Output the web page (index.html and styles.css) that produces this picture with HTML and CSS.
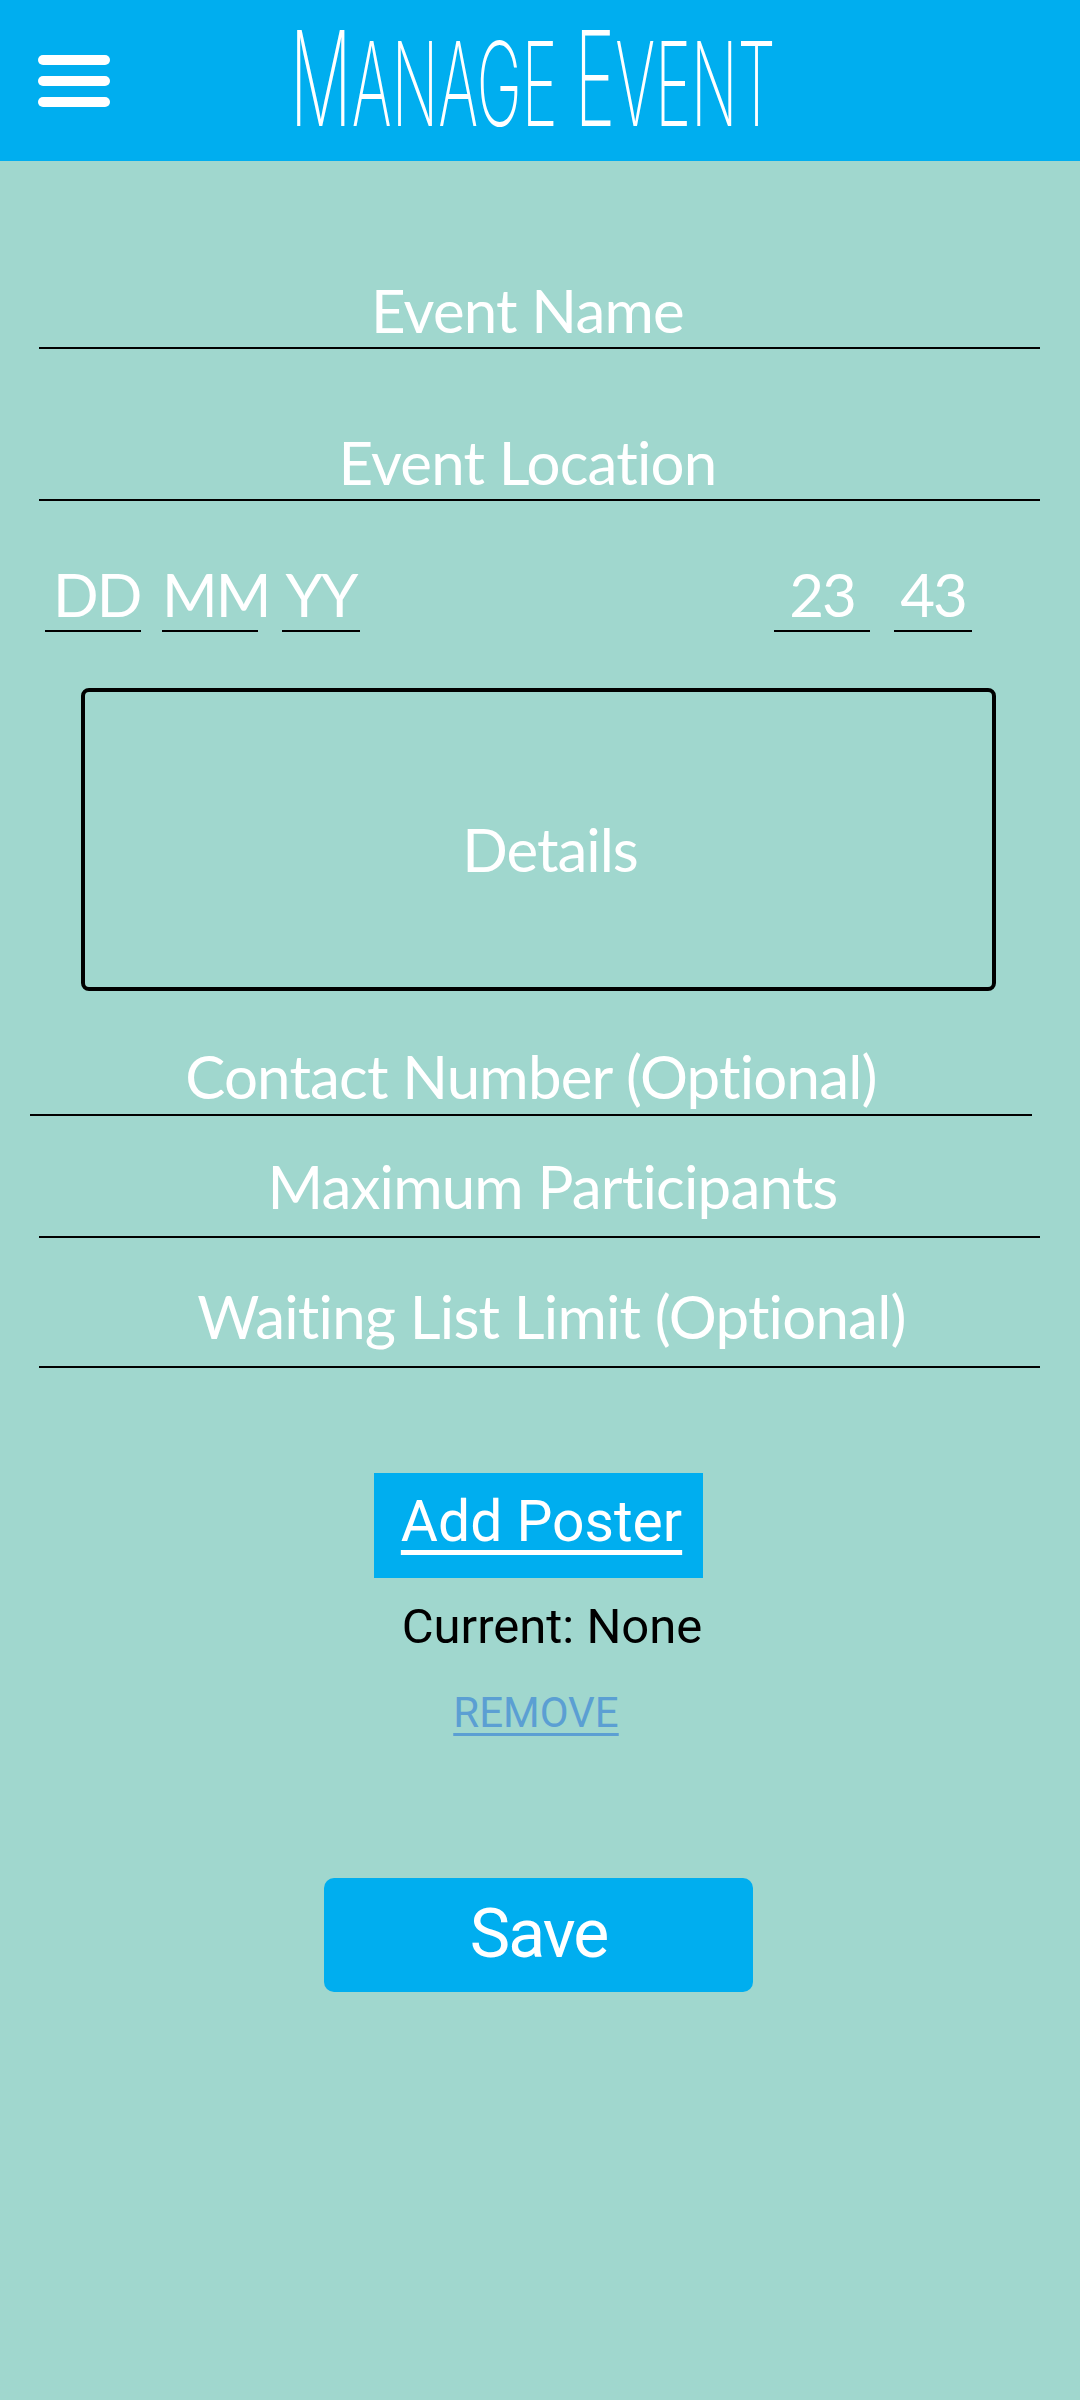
FILE: index.html
```html
<!DOCTYPE html>
<html lang="en">
<head>
<meta charset="utf-8">
<title>Manage Event</title>
<link rel="stylesheet" href="styles.css">
</head>
<body>
<header class="topbar">
  <div class="menu" aria-label="Menu">
    <span class="bar"></span>
    <span class="bar"></span>
    <span class="bar"></span>
  </div>
  <h1 class="title"><span class="title-inner"><span class="big">M</span>anage <span class="big">E</span>vent</span></h1>
</header>
<main class="form">
  <div class="field f-name">Event Name</div>
  <div class="field f-loc">Event Location</div>
  <div class="daterow">
    <div class="dgroup">
      <div class="dfield w96 dd">DD</div>
      <div class="dfield w96">MM</div>
      <div class="dfield w78 yy">YY</div>
    </div>
    <div class="dgroup tgroup">
      <div class="dfield w96">23</div>
      <div class="dfield w78">43</div>
    </div>
  </div>
  <div class="details"><span>Details</span></div>
  <div class="field f-contact">Contact Number (Optional)</div>
  <div class="field f-max">Maximum Participants</div>
  <div class="field f-wait">Waiting List Limit (Optional)</div>
  <div class="poster"><span class="poster-label">Add Poster</span></div>
  <div class="current">Current: None</div>
  <div class="remove">REMOVE</div>
  <div class="save">Save</div>
</main>
</body>
</html>
```
FILE: styles.css
```css
html, body {
  margin: 0;
  padding: 0;
}
body {
  width: 1080px;
  min-height: 2400px;
  background: #a0d7ce;
  font-family: Lato, "Noto Sans", sans-serif;
  font-variant-ligatures: none;
}
.topbar {
  height: 161px;
  background: #00aeef;
  display: flex;
  align-items: center;
  padding-left: 38px;
  box-sizing: border-box;
}
.menu {
  display: flex;
  flex-direction: column;
  gap: 11px;
  width: 72px;
  flex-shrink: 0;
}
.bar {
  display: block;
  height: 10px;
  background: #fff;
  border-radius: 5px;
}
.title {
  flex: 1;
  min-width: 0;
  margin: 0 124px 0 0;
  display: flex;
  justify-content: center;
  font-family: Inter, "DejaVu Sans", sans-serif;
  font-weight: 200;
  font-size: 117px;
  line-height: 132px;
  color: #fff;
  text-transform: uppercase;
  white-space: nowrap;
}
.title-inner {
  display: block;
  flex-shrink: 0;
  transform: scaleX(0.52);
}
.big {
  font-size: 132px;
}
.form {
  display: flex;
  flex-direction: column;
  padding-top: 113px;
  color: #fff;
}
.field {
  font-size: 60px;
  line-height: 72px;
  letter-spacing: -0.8px;
  text-align: center;
  border-bottom: 2px solid #000;
  margin-left: 39px;
  width: 1001px;
  box-sizing: border-box;
  padding-bottom: 1px;
}
.f-name { padding-right: 24px; }
.f-loc { margin-top: 77px; padding-right: 24px; }
.f-contact { margin-top: 49px; margin-left: 30px; width: 1002px; padding-bottom: 2px; }
.f-max { margin-top: 34px; padding-left: 26px; padding-bottom: 14px; }
.f-wait { margin-top: 42px; padding-left: 24px; padding-bottom: 14px; }
.daterow {
  margin-top: 57px;
  display: flex;
  justify-content: space-between;
  padding: 0 108px 0 45px;
}
.dgroup {
  display: flex;
  gap: 21px;
}
.tgroup {
  gap: 24px;
}
.dfield {
  font-size: 60px;
  line-height: 72px;
  letter-spacing: -2px;
  text-align: center;
  border-bottom: 2px solid #000;
}
.w96 { width: 96px; }
.w78 { width: 78px; }
.yy { margin-left: 3px; }
.dd { text-align: left; padding-left: 8px; box-sizing: border-box; }
.details {
  margin: 56px 0 0 81px;
  width: 915px;
  height: 303px;
  box-sizing: border-box;
  border: 4px solid #000;
  border-radius: 8px;
  display: flex;
  align-items: center;
  justify-content: center;
  padding: 19px 0 0 23px;
  font-size: 60px;
  line-height: 72px;
  letter-spacing: -1px;
}
.poster {
  margin-top: 105px;
  align-self: center;
  margin-left: -3px;
  background: #00aeef;
  height: 105px;
  box-sizing: border-box;
  padding: 15px 21px 0 27px;
  font-family: Roboto, "Noto Sans", sans-serif;
  font-size: 57px;
  line-height: 67px;
}
.poster-label {
  text-decoration: underline;
  text-decoration-thickness: 5px;
  text-underline-offset: 9px;
}
.current {
  margin-top: 20px;
  align-self: center;
  margin-left: 24px;
  color: #000;
  font-family: Roboto, "Noto Sans", sans-serif;
  font-size: 49px;
  line-height: 57px;
}
.remove {
  margin-top: 33px;
  align-self: center;
  margin-left: -8px;
  color: #5b9fd3;
  font-family: Roboto, "Noto Sans", sans-serif;
  font-size: 42px;
  line-height: 49px;
  text-decoration: underline;
  text-decoration-thickness: 3px;
  text-underline-offset: 6px;
}
.save {
  margin-top: 141px;
  align-self: center;
  margin-left: -3px;
  width: 429px;
  height: 114px;
  box-sizing: border-box;
  background: #00aeef;
  border-radius: 10px;
  text-align: center;
  padding-top: 16px;
  font-family: Roboto, "Noto Sans", sans-serif;
  font-size: 68px;
  line-height: 80px;
  letter-spacing: -2px;
}
```
